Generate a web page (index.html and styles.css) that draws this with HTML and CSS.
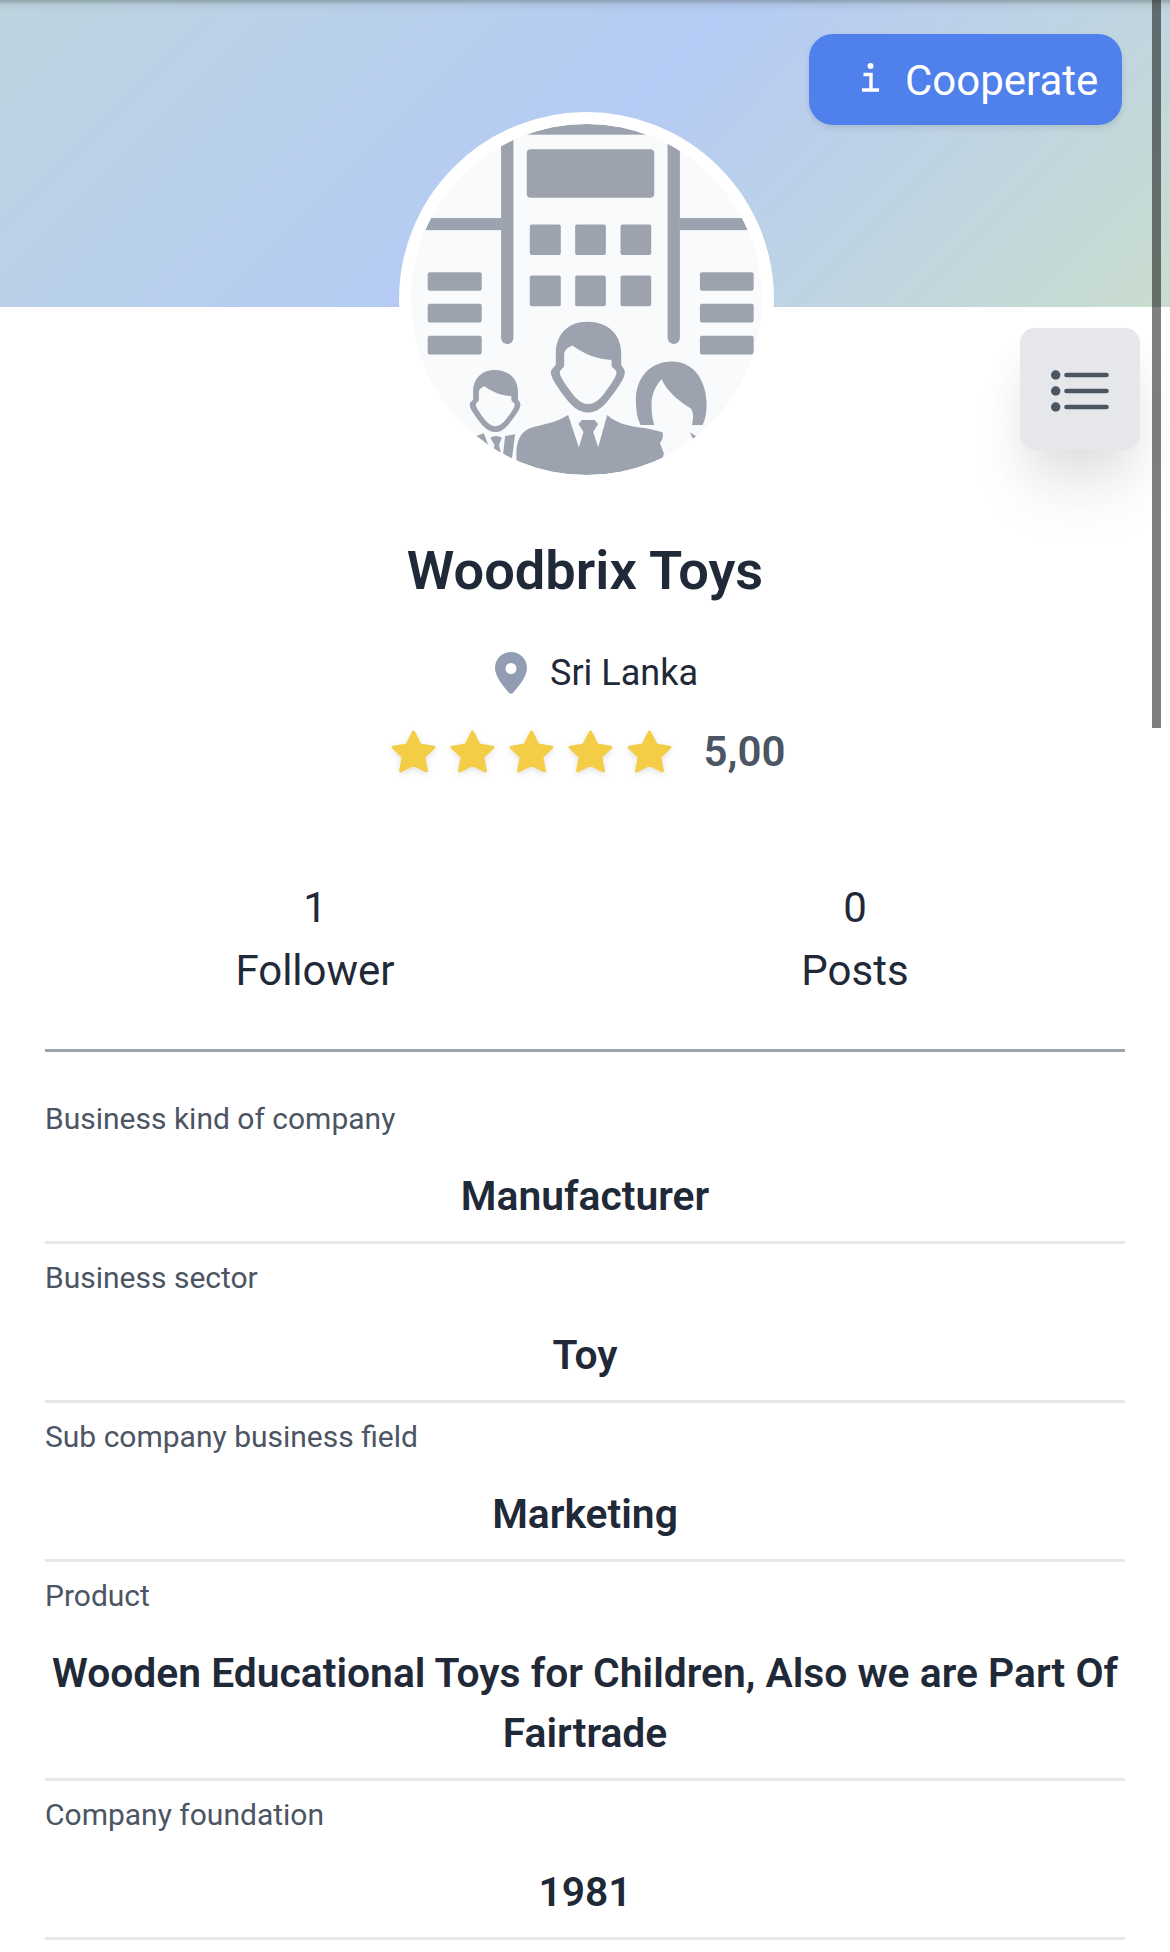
FILE: index.html
```html
<!DOCTYPE html>
<html lang="en">
<head>
    <meta charset="UTF-8">
    <meta name="viewport" content="width=device-width, initial-scale=1.0">
    <title>Woodbrix Toys</title>
    <link rel="stylesheet" href="styles.css">
</head>
<body>
    <div class="page">
        <div class="cover"></div>
        <button class="cooperate">
            <svg class="cooperate-i" width="17" height="29" viewBox="0 0 17 29">
                <circle cx="8.500" cy="3" r="3" fill="#ffffff"/>
                <path d="M1.500 11.500H9V27M0 27H17" fill="none" stroke="#ffffff" stroke-width="3.400"/>
            </svg>
            Cooperate
        </button>
        <button class="menu-btn" aria-label="menu">
            <svg width="58" height="42" viewBox="0 0 58 42">
                <circle cx="4.700" cy="5" r="4.700" fill="#4b5563"/>
                <circle cx="4.700" cy="21" r="4.700" fill="#4b5563"/>
                <circle cx="4.700" cy="37" r="4.700" fill="#4b5563"/>
                <path d="M15.500 5H55.500M15.500 21H55.500M15.500 37H55.500" stroke="#4b5563" stroke-width="4.600" stroke-linecap="round"/>
            </svg>
        </button>
        <div class="scrollbar"></div>

        <div class="avatar">
            <svg width="351" height="351" viewBox="94 73 1052 1052">
                <defs>
                    <clipPath id="round"><circle cx="620" cy="599" r="526"/></clipPath>
                    <path id="head" fill-rule="evenodd" d="M622 666C685 666 724 705 724 760V792C724 800 735 805 735 818C735 835 712 868 690 895C670 922 650 938 625 938C600 938 578 922 558 895C537 868 513 835 513 818C513 805 528 800 528 792V760C528 705 565 666 622 666ZM578 737C565 742 553 750 553 765V795C553 805 540 808 540 818C540 830 560 858 578 882C595 903 610 912 625 912C640 912 655 903 672 882C690 858 710 830 710 818C710 808 695 805 695 795V780C655 778 615 765 578 737Z"/>
                </defs>
                <g clip-path="url(#round)" fill="#9ca3af">
                    <rect x="300" y="50" width="640" height="55"/>
                    <rect x="441" y="149" width="382" height="145" rx="12"/>
                    <path d="M364 100H401V714A18.500 18.500 0 0 1 364 714Z"/>
                    <path d="M863 100H900V714A18.500 18.500 0 0 1 863 714Z"/>
                    <rect x="90" y="355" width="274" height="36"/>
                    <rect x="900" y="355" width="250" height="36"/>
                    <rect x="450" y="374" width="93" height="92" rx="6"/>
                    <rect x="586" y="374" width="92" height="92" rx="6"/>
                    <rect x="722" y="374" width="92" height="92" rx="6"/>
                    <rect x="450" y="527" width="93" height="92" rx="6"/>
                    <rect x="586" y="527" width="92" height="92" rx="6"/>
                    <rect x="722" y="527" width="92" height="92" rx="6"/>
                    <rect x="144" y="517" width="162" height="56" rx="6"/>
                    <rect x="144" y="612" width="162" height="56" rx="6"/>
                    <rect x="144" y="708" width="162" height="56" rx="6"/>
                    <rect x="960" y="517" width="161" height="56" rx="6"/>
                    <rect x="960" y="612" width="161" height="56" rx="6"/>
                    <rect x="960" y="708" width="161" height="56" rx="6"/>
                    <use href="#head"/>
                    <use href="#head" transform="translate(-81.400 353.800) scale(.685)"/>
                    <path fill-rule="evenodd" d="M875 785C940 785 980 840 980 915C980 940 976 958 968 975H936C942 950 940 935 932 925C900 905 865 880 845 838C825 860 815 885 815 915C815 940 818 955 823 975H782C772 955 768 930 768 900C768 835 810 785 875 785Z"/>
                    <path d="M410 1130V1060C410 1020 425 995 450 985C490 972 530 968 565 945L597 1042L611 996L596 972L606 960H644L655 972L640 996L655 1042L682 945C715 975 760 980 800 985L848 997C852 1015 845 1020 840 1030L852 1060L835 1130Z"/>
                    <path d="M290 1008L312 1000L336 1062L300 1062ZM332 1014C340 1006 358 1006 366 1014L358 1034L366 1070H338L344 1034ZM376 1008L406 1003L396 1080H368Z"/>
                    <path d="M930 997L948 1008L960 1030L945 1030Z"/>
                </g>
            </svg>
        </div>

        <h1 class="name">Woodbrix Toys</h1>

        <div class="location">
            <svg width="32" height="42" viewBox="0 0 32 42">
                <path fill="#929db3" fill-rule="evenodd" d="M16 0C25 0 32 7 32 16C32 25 23 35 18 41C17 42 15 42 14 41C9 35 0 25 0 16C0 7 7 0 16 0ZM16 11A5.500 5.500 0 1 0 16 22A5.500 5.500 0 1 0 16 11Z"/>
            </svg>
            <span>Sri Lanka</span>
        </div>

        <div class="rating">
            <div class="stars">
                <svg class="star" width="47" height="45" viewBox="0 0 44 42"><path d="M22 3L28 15L41 17L31.500 26L34 39L22 33L10 39L12.500 26L3 17L16 15Z"/></svg>
                <svg class="star" width="47" height="45" viewBox="0 0 44 42"><path d="M22 3L28 15L41 17L31.500 26L34 39L22 33L10 39L12.500 26L3 17L16 15Z"/></svg>
                <svg class="star" width="47" height="45" viewBox="0 0 44 42"><path d="M22 3L28 15L41 17L31.500 26L34 39L22 33L10 39L12.500 26L3 17L16 15Z"/></svg>
                <svg class="star" width="47" height="45" viewBox="0 0 44 42"><path d="M22 3L28 15L41 17L31.500 26L34 39L22 33L10 39L12.500 26L3 17L16 15Z"/></svg>
                <svg class="star" width="47" height="45" viewBox="0 0 44 42"><path d="M22 3L28 15L41 17L31.500 26L34 39L22 33L10 39L12.500 26L3 17L16 15Z"/></svg>
            </div>
            <span class="score">5,00</span>
        </div>

        <div class="content">
            <div class="stats">
                <div class="stat"><div>1</div><div>Follower</div></div>
                <div class="stat"><div>0</div><div>Posts</div></div>
            </div>

            <div class="info first">
                <div class="info-label">Business kind of company</div>
                <div class="info-value">Manufacturer</div>
            </div>
            <div class="info">
                <div class="info-label">Business sector</div>
                <div class="info-value">Toy</div>
            </div>
            <div class="info">
                <div class="info-label">Sub company business field</div>
                <div class="info-value">Marketing</div>
            </div>
            <div class="info">
                <div class="info-label">Product</div>
                <div class="info-value">Wooden Educational Toys for Children, Also we are Part Of Fairtrade</div>
            </div>
            <div class="info">
                <div class="info-label">Company foundation</div>
                <div class="info-value">1981</div>
            </div>
        </div>
    </div>
</body>
</html>
```

FILE: styles.css
```css
html,
body {
    margin: 0;
    padding: 0;
    background: #ffffff;
}

body {
    font-family: Roboto, "Liberation Sans", sans-serif;
    color: #1f2937;
}

.page {
    position: relative;
    width: 1170px;
    height: 1952px;
    overflow: hidden;
}

.cover {
    height: 307px;
    background:
        linear-gradient(to bottom, rgba(80, 90, 85, .4) 0, rgba(80, 90, 85, .08) 5px, rgba(80, 90, 85, 0) 12px),
        linear-gradient(135deg, #bdd5df 0%, #b5cbf5 50%, #c9ddcf 100%);
}

.cooperate {
    position: absolute;
    top: 34px;
    left: 809px;
    width: 313px;
    height: 91px;
    padding: 2px 0 0 53px;
    display: flex;
    align-items: center;
    gap: 26px;
    border: none;
    border-radius: 24px;
    background: #4f80ec;
    box-shadow: 0 3px 6px rgba(0, 0, 0, .1);
    color: #ffffff;
    font-family: Roboto, sans-serif;
    font-size: 42px;
}

.cooperate-i {
    flex: none;
    margin-top: -7px;
}

.menu-btn {
    position: absolute;
    top: 328px;
    left: 1020px;
    width: 120px;
    height: 122px;
    padding: 4px 0 0;
    display: flex;
    align-items: center;
    justify-content: center;
    border: none;
    border-radius: 15px;
    background: #e5e7eb;
    box-shadow: 0 25px 50px -12px rgba(0, 0, 0, .1), 0 50px 60px rgba(0, 0, 0, .05);
}

.scrollbar {
    position: absolute;
    top: 0;
    left: 1152px;
    width: 9px;
    height: 728px;
    background: rgba(0, 0, 0, .5);
}

.avatar {
    width: 351px;
    height: 351px;
    margin: -195px auto 0;
    position: relative;
    left: 1.5px;
    border: 12px solid #ffffff;
    border-radius: 50%;
    background: #f9fafb;
    overflow: hidden;
}

.avatar svg {
    display: block;
}

.name {
    margin: 51px 0 0;
    font-size: 54.200px;
    line-height: 66px;
    font-weight: 600;
    text-align: center;
}

.location {
    margin-top: 45px;
    padding-left: 23px;
    display: flex;
    align-items: center;
    justify-content: center;
    gap: 23px;
    font-size: 36px;
    line-height: 48px;
}

.rating {
    margin-top: 27px;
    padding-left: 5px;
    display: flex;
    align-items: center;
    justify-content: center;
    gap: 31px;
}

.stars {
    display: flex;
    gap: 12px;
}

.star {
    display: block;
    filter: drop-shadow(0 2px 3px rgba(0, 0, 0, .12));
}

.star path {
    fill: #f4cd46;
    stroke: #f4cd46;
    stroke-width: 3;
    stroke-linejoin: round;
}

.score {
    padding-top: 1px;
    font-size: 42px;
    line-height: 54px;
    font-weight: 600;
    color: #4b5563;
}

.content {
    margin: 0 45px;
    padding-top: 97px;
}

.stats {
    display: grid;
    grid-template-columns: 1fr 1fr;
    padding-bottom: 47px;
    border-bottom: 3px solid #9ca3af;
}

.stat {
    text-align: center;
    font-size: 42px;
    line-height: 63px;
}

.info {
    padding: 11px 0 15px;
    border-bottom: 3px solid #e5e7eb;
}

.info.first {
    padding-top: 44px;
}

.info-label {
    font-size: 30px;
    line-height: 45px;
    color: #4b5563;
}

.info-value {
    margin-top: 25px;
    font-size: 40.800px;
    line-height: 60px;
    font-weight: 600;
    text-align: center;
}
```
